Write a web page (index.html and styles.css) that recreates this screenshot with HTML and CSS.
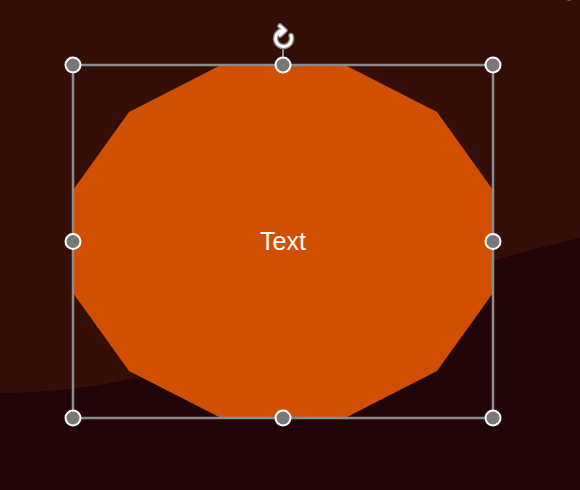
FILE: index.html
```html
<!DOCTYPE html>
<html lang="en">
<head>
    <meta charset="UTF-8">
    <title>Shape editor</title>
    <link rel="stylesheet" href="styles.css">
</head>
<body>
<div class="stage">
    <svg class="canvas" width="580" height="490" viewBox="0 0 580 490">
        <rect class="bg-top" x="0" y="0" width="580" height="490"/>
        <path class="bg-bottom" d="M0 393 C 210 392, 340 292, 580 238 L580 490 L0 490 Z"/>

        <!-- 12 sided shape -->
        <polygon class="shape" points="221,65 345,65 437,112 493,190 493,293 437,371 345,418 221,418 129,371 73,293 73,190 129,112"/>

        <!-- selection -->
        <rect class="frame" x="73" y="65" width="420" height="353"/>
        <line class="stem" x1="283" y1="48" x2="283" y2="58"/>

        <g class="rotate">
            <path class="rot-outline" d="M291 35.5 A8 8 0 1 1 283.5 30.5 M280 26 L285 30.5 L280 35"/>
            <path class="rot-line" d="M291 35.5 A8 8 0 1 1 283.5 30.5 M280 26 L285 30.5 L280 35"/>
        </g>

        <circle class="handle" cx="73" cy="65" r="7.5"/>
        <circle class="handle" cx="283" cy="65" r="7.5"/>
        <circle class="handle" cx="493" cy="65" r="7.5"/>
        <circle class="handle" cx="73" cy="241.5" r="7.5"/>
        <circle class="handle" cx="493" cy="241.5" r="7.5"/>
        <circle class="handle" cx="73" cy="418" r="7.5"/>
        <circle class="handle" cx="283" cy="418" r="7.5"/>
        <circle class="handle" cx="493" cy="418" r="7.5"/>

        <circle class="corner-mark" cx="569" cy="-7" r="7"/>
    </svg>
    <div class="label">Text</div>
</div>
</body>
</html>
```

FILE: styles.css
```css
* {
    margin: 0;
    padding: 0;
}
html, body {
    width: 580px;
    height: 490px;
    overflow: hidden;
    background: #210407;
}
.stage {
    position: relative;
    width: 580px;
    height: 490px;
}
.canvas {
    display: block;
}
.bg-top {
    fill: #330f07;
}
.bg-bottom {
    fill: #210407;
}
.shape {
    fill: #d14f00;
}
.frame {
    fill: none;
    stroke: #8c8c8c;
    stroke-width: 2.5;
}
.stem {
    stroke: #8c8c8c;
    stroke-width: 2;
}
.rot-outline {
    fill: none;
    stroke: #8c8c8c;
    stroke-width: 5.5;
    stroke-linecap: round;
    stroke-linejoin: round;
}
.rot-line {
    fill: none;
    stroke: #ffffff;
    stroke-width: 2.8;
    stroke-linecap: round;
    stroke-linejoin: round;
}
.handle {
    fill: #777777;
    stroke: #ffffff;
    stroke-width: 2;
}
.corner-mark {
    fill: #777777;
    stroke: #c8b0a8;
    stroke-width: 1;
}
/* label sits over the shape */
.label {
    position: absolute;
    left: 73px;
    top: 65px;
    width: 420px;
    height: 353px;
    display: flex;
    align-items: center;
    justify-content: center;
    font-family: "Liberation Sans", Arial, sans-serif;
    font-size: 25px;
    color: #ffffff;
}
```
